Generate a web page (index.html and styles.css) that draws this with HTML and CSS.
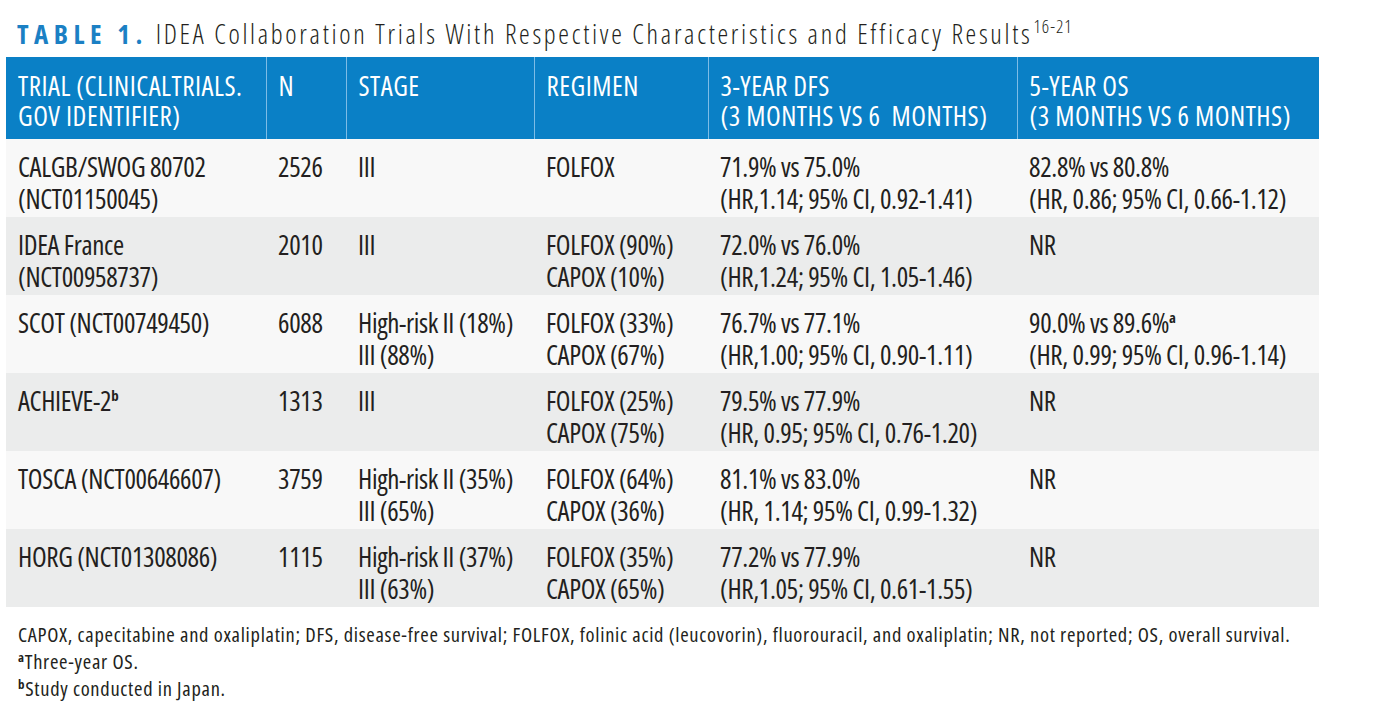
FILE: index.html
```html
<!DOCTYPE html>
<html lang="en">
<head>
<meta charset="utf-8">
<title>Table 1</title>
<link rel="stylesheet" href="styles.css">
</head>
<body>
<div class="page">
  <h1 class="title"><span class="label">TABLE 1.</span> IDEA Collaboration Trials With Respective Characteristics and Efficacy Results<sup class="ref">16-21</sup></h1>
  <table class="trials">
    <colgroup>
      <col class="c-trial"><col class="c-n"><col class="c-stage"><col class="c-reg"><col class="c-dfs"><col class="c-os">
    </colgroup>
    <thead>
      <tr>
        <th>TRIAL (CLINICALTRIALS.<br>GOV IDENTIFIER)</th>
        <th>N</th>
        <th>STAGE</th>
        <th>REGIMEN</th>
        <th>3-YEAR DFS<br>(3 MONTHS VS 6&nbsp; MONTHS)</th>
        <th>5-YEAR OS<br>(3 MONTHS VS 6 MONTHS)</th>
      </tr>
    </thead>
    <tbody>
      <tr>
        <td>CALGB/SWOG 80702<br>(NCT01150045)</td>
        <td>2526</td>
        <td>III</td>
        <td>FOLFOX</td>
        <td>71.9% vs 75.0%<br>(HR,1.14; 95% CI, 0.92-1.41)</td>
        <td>82.8% vs 80.8%<br>(HR, 0.86; 95% CI, 0.66-1.12)</td>
      </tr>
      <tr>
        <td>IDEA France<br>(NCT00958737)</td>
        <td>2010</td>
        <td>III</td>
        <td>FOLFOX (90%)<br>CAPOX (10%)</td>
        <td>72.0% vs 76.0%<br>(HR,1.24; 95% CI, 1.05-1.46)</td>
        <td>NR</td>
      </tr>
      <tr>
        <td>SCOT (NCT00749450)</td>
        <td>6088</td>
        <td>High-risk II (18%)<br>III (88%)</td>
        <td>FOLFOX (33%)<br>CAPOX (67%)</td>
        <td>76.7% vs 77.1%<br>(HR,1.00; 95% CI, 0.90-1.11)</td>
        <td>90.0% vs 89.6%<sup class="fn">a</sup><br>(HR, 0.99; 95% CI, 0.96-1.14)</td>
      </tr>
      <tr>
        <td>ACHIEVE-2<sup class="fn">b</sup></td>
        <td>1313</td>
        <td>III</td>
        <td>FOLFOX (25%)<br>CAPOX (75%)</td>
        <td>79.5% vs 77.9%<br>(HR, 0.95; 95% CI, 0.76-1.20)</td>
        <td>NR</td>
      </tr>
      <tr>
        <td>TOSCA (NCT00646607)</td>
        <td>3759</td>
        <td>High-risk II (35%)<br>III (65%)</td>
        <td>FOLFOX (64%)<br>CAPOX (36%)</td>
        <td>81.1% vs 83.0%<br>(HR, 1.14; 95% CI, 0.99-1.32)</td>
        <td>NR</td>
      </tr>
      <tr>
        <td>HORG (NCT01308086)</td>
        <td>1115</td>
        <td>High-risk II (37%)<br>III (63%)</td>
        <td>FOLFOX (35%)<br>CAPOX (65%)</td>
        <td>77.2% vs 77.9%<br>(HR,1.05; 95% CI, 0.61-1.55)</td>
        <td>NR</td>
      </tr>
    </tbody>
  </table>
  <div class="notes">
    <p>CAPOX, capecitabine and oxaliplatin; DFS, disease-free survival; FOLFOX, folinic acid (leucovorin), fluorouracil, and oxaliplatin; NR, not reported; OS, overall survival.</p>
    <p><sup class="fn">a</sup>Three-year OS.</p>
    <p><sup class="fn">b</sup>Study conducted in Japan.</p>
  </div>
</div>
</body>
</html>
```
FILE: styles.css
```css
html, body {
  margin: 0;
  padding: 0;
  background: #ffffff;
}

body {
  font-family: "Open Sans", "Roboto Condensed", sans-serif;
  font-stretch: 87.5%;
  color: #231f20;
}

.page {
  padding: 18px 0 0 6px;
}

.title {
  margin: 0 0 7px 11px;
  font-size: 27px;
  line-height: 32px;
  font-weight: 300;
  letter-spacing: 2.7px;
  color: #231f20;
  white-space: nowrap;
}

.title .label {
  font-weight: 700;
  color: #1b80c4;
  letter-spacing: 5.5px;
}

.title .ref {
  font-size: 18px;
  line-height: 0;
  letter-spacing: 1px;
  vertical-align: 0;
  position: relative;
  top: -11px;
  margin-left: 1px;
  font-weight: 300;
}

.trials {
  width: 1313px;
  table-layout: fixed;
  border-collapse: collapse;
  border-spacing: 0;
}

.c-trial { width: 260px; }
.c-n { width: 80px; }
.c-stage { width: 188px; }
.c-reg { width: 174px; }
.c-dfs { width: 309px; }
.c-os { width: 302px; }

.trials th {
  background: #0a80c6;
  color: #ffffff;
  font-weight: 400;
  font-size: 27px;
  letter-spacing: 0.5px;
  line-height: 30px;
  text-align: left;
  vertical-align: top;
  padding: 14px 12px 8px;
  border-left: 1px solid #7dbce6;
  white-space: nowrap;
}

.trials th:first-child {
  border-left: none;
}

.trials td {
  font-size: 27px;
  letter-spacing: -0.35px;
  line-height: 32px;
  font-weight: 400;
  text-align: left;
  vertical-align: top;
  padding: 12px 12px 2px;
  white-space: nowrap;
}

.trials tbody tr:nth-child(odd) td {
  background: #f8f8f8;
}

.trials tbody tr:nth-child(even) td {
  background: #ebecec;
}

.fn {
  font-size: 0.55em;
  font-weight: 700;
  vertical-align: 0;
  position: relative;
  top: -0.7em;
  line-height: 0;
}

.notes {
  margin: 14px 0 0 12px;
  font-size: 20.5px;
  letter-spacing: 0.7px;
  line-height: 27px;
  font-weight: 400;
}

.notes p {
  margin: 0;
  white-space: nowrap;
}

.notes .fn {
  font-size: 13px;
  top: -7px;
}
```
